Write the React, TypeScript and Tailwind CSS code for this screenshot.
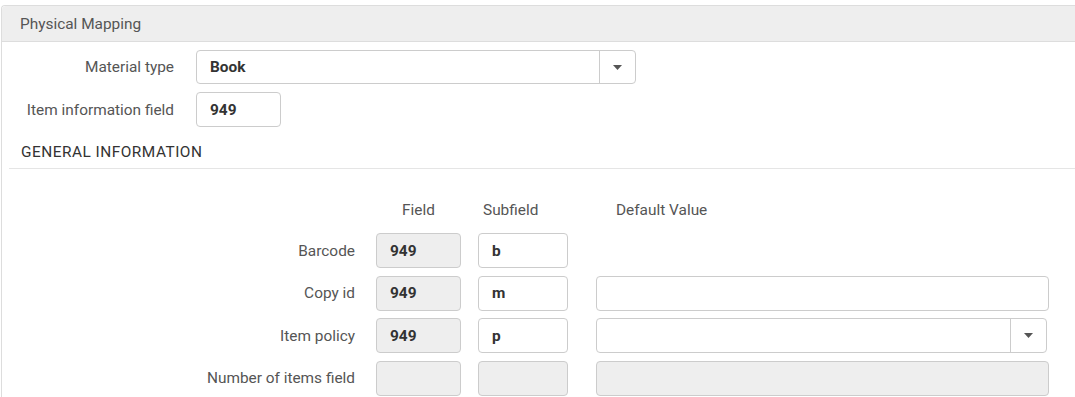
import React from "react";

const Caret = () => (
  <svg width="9" height="5" viewBox="0 0 9 5" className="block">
    <path d="M0 0 L9 0 L4.5 5 Z" fill="#555" />
  </svg>
);

const TextBox = ({ value = "", disabled = false, w }: { value?: string; disabled?: boolean; w: string }) => (
  <div
    className={`${w} h-[35px] shrink-0 rounded-[4px] border border-[#ccc] flex items-center px-[13px] font-bold text-[#333] ${
      disabled ? "bg-[#eee]" : "bg-white"
    }`}
  >
    {value}
  </div>
);

const Select = ({ value = "", w, h }: { value?: string; w: string; h: string }) => (
  <div className={`${w} ${h} shrink-0 rounded-[4px] border border-[#ccc] bg-white flex`}>
    <div className="flex-1 flex items-center px-[13px] font-bold text-[#333]">{value}</div>
    <div className="w-[36px] border-l border-[#ccc] flex items-center justify-center">
      <Caret />
    </div>
  </div>
);

const Row = ({ label, children }: { label: string; children: React.ReactNode }) => (
  <div className="flex items-center h-[35px]">
    <div className="w-[353px] shrink-0 text-right text-[#555]">{label}</div>
    <div className="flex items-center ml-[21px]">{children}</div>
  </div>
);

export default function App() {
  return (
    <div
      className="w-[1075px] h-[397px] overflow-hidden bg-white pt-[5px] pl-[1px] text-[15.4px] leading-[20px]"
      style={{ fontFamily: "Roboto, 'Liberation Sans', sans-serif" }}
    >
      <div className="h-[400px] border-l border-t border-[#ddd] rounded-tl-[4px]">
        <div className="h-[36px] bg-[#eee] border-b border-[#ddd] flex items-center pl-[18px] text-[#555] rounded-tl-[4px]">
          Physical Mapping
        </div>

        <div className="flex items-center mt-[8px]">
          <div className="w-[172px] text-right text-[#555]">Material type</div>
          <div className="ml-[22px]">
            <Select value="Book" w="w-[440px]" h="h-[34px]" />
          </div>
        </div>

        <div className="flex items-center mt-[8px]">
          <div className="w-[172px] text-right text-[#555]">Item information field</div>
          <div className="ml-[22px]">
            <TextBox value="949" w="w-[85px]" />
          </div>
        </div>

        <div className="ml-[7px] h-[42px] border-b border-[#e5e5e5] flex items-center pl-[12px] pt-[8px] text-[#333] tracking-[0.5px] uppercase">
          General Information
        </div>

        <div className="flex items-center mt-[31px] h-[20px] text-[#555]">
          <div className="w-[353px] shrink-0" />
          <div className="ml-[21px] w-[85px] text-center">Field</div>
          <div className="ml-[17px] w-[90px] pl-[5px]">Subfield</div>
          <div className="ml-[28px] pl-[20px]">Default Value</div>
        </div>

        <div className="flex flex-col gap-[7.6px] mt-[13px]">
          <Row label="Barcode">
            <TextBox value="949" disabled w="w-[85px]" />
            <div className="ml-[17px]">
              <TextBox value="b" w="w-[90px]" />
            </div>
          </Row>
          <Row label="Copy id">
            <TextBox value="949" disabled w="w-[85px]" />
            <div className="ml-[17px]">
              <TextBox value="m" w="w-[90px]" />
            </div>
            <div className="ml-[28px]">
              <TextBox w="w-[453px]" />
            </div>
          </Row>
          <Row label="Item policy">
            <TextBox value="949" disabled w="w-[85px]" />
            <div className="ml-[17px]">
              <TextBox value="p" w="w-[90px]" />
            </div>
            <div className="ml-[28px]">
              <Select w="w-[451px]" h="h-[35px]" />
            </div>
          </Row>
          <Row label="Number of items field">
            <TextBox disabled w="w-[85px]" />
            <div className="ml-[17px]">
              <TextBox disabled w="w-[90px]" />
            </div>
            <div className="ml-[28px]">
              <TextBox disabled w="w-[453px]" />
            </div>
          </Row>
        </div>
      </div>
    </div>
  );
}
